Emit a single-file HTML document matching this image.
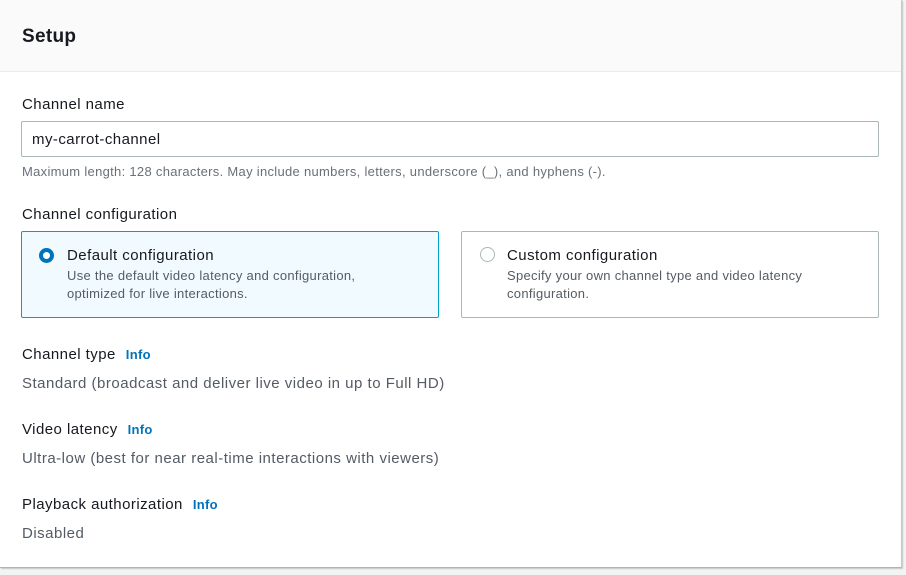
<!DOCTYPE html>
<html><head><meta charset="utf-8"><style>
*{margin:0;padding:0;box-sizing:border-box}
body{width:906px;height:575px;background:#f2f3f3;font-family:"Liberation Sans",Arial,sans-serif;color:#16191f;position:relative;overflow:hidden}
.card{position:absolute;left:0;top:0;width:902px;height:568px;background:#fff;border-right:1px solid #c6c9c9;border-bottom:1px solid #aab7b8;box-shadow:1px 1px 1px rgba(0,28,36,.2)}
.hdr{position:absolute;left:0;top:0;width:901px;height:72px;background:#fafafa;border-bottom:1px solid #eaeded}
.t{position:absolute;white-space:nowrap}
h2{position:absolute;left:22px;top:26px;font-size:19px;font-weight:bold;letter-spacing:0.3px}
.lab{font-size:15px;letter-spacing:0.45px}
.inp{position:absolute;left:21px;top:121px;width:858px;height:36px;border:1px solid #aab7b8;border-radius:2px;font-size:15px;letter-spacing:0.45px;padding:9px 10px}
.hint{font-size:13px;color:#687078;letter-spacing:0.3px}
.tile{position:absolute;top:231px;height:87px;border-radius:2px}
.r{position:absolute;width:15px;height:15px;border-radius:50%}
.tt{font-size:15px;letter-spacing:0.45px;position:absolute;left:45px;top:15px}
.td{font-size:13px;letter-spacing:0.3px;color:#545b64;position:absolute;left:45px;top:35px;line-height:18px}
.info{color:#0073bb;font-weight:bold;font-size:13px;margin-left:10px;letter-spacing:0.3px}
.val{font-size:15px;letter-spacing:0.5px;color:#545b64}
</style></head><body>
<div class="card">
<div class="hdr"></div>
<h2>Setup</h2>
<div class="t lab" style="left:22px;top:96px">Channel name</div>
<div class="inp">my-carrot-channel</div>
<div class="t hint" style="left:22px;top:164px">Maximum length: 128 characters. May include numbers, letters, underscore (_), and hyphens (-).</div>
<div class="t lab" style="left:22px;top:206px">Channel configuration</div>
<div class="tile" style="left:21px;width:418px;background:#f1faff;border:1px solid #00a1c9">
 <div class="r" style="left:17px;top:16px;border:4px solid #0073bb;background:#fff"></div>
 <div class="tt">Default configuration</div>
 <div class="td">Use the default video latency and configuration,<br>optimized for live interactions.</div>
</div>
<div class="tile" style="left:461px;width:418px;background:#fff;border:1px solid #aab7b8">
 <div class="r" style="left:18px;top:15px;border:1px solid #aab7b8"></div>
 <div class="tt">Custom configuration</div>
 <div class="td">Specify your own channel type and video latency<br>configuration.</div>
</div>
<div class="t lab" style="left:22px;top:346px">Channel type<span class="info">Info</span></div>
<div class="t val" style="left:22px;top:375px">Standard (broadcast and deliver live video in up to Full HD)</div>
<div class="t lab" style="left:22px;top:421px">Video latency<span class="info">Info</span></div>
<div class="t val" style="left:22px;top:450px">Ultra-low (best for near real-time interactions with viewers)</div>
<div class="t lab" style="left:22px;top:496px">Playback authorization<span class="info">Info</span></div>
<div class="t val" style="left:22px;top:525px">Disabled</div>
</div>
</body></html>
